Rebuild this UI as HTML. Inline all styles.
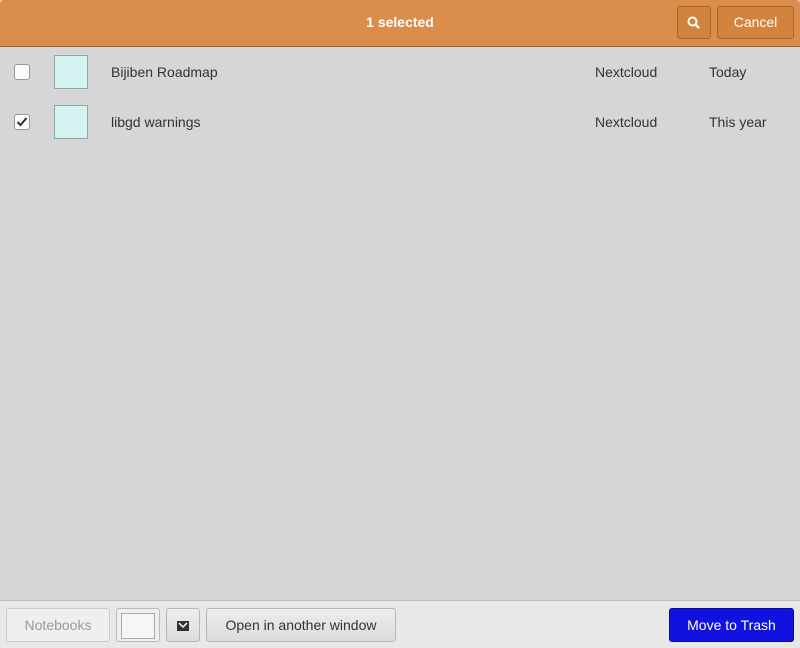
<!DOCTYPE html>
<html><head><style>
body{margin:0;width:800px;height:647px;background:#d5d6d5;font-family:"Liberation Sans",sans-serif;font-size:14px;color:#2e3436;position:relative;overflow:hidden}
.hdr{position:absolute;left:0;top:0;width:800px;height:46px;background:#d98e4b;border-bottom:1px solid #a0612a;border-radius:4px 4px 0 0}
.title{position:absolute;left:0;width:800px;top:14px;text-align:center;color:#fff;font-weight:bold;font-size:14px}
.hb{position:absolute;top:6px;height:33px;background:#d2843f;border:1px solid #a96526;border-radius:3px;box-sizing:border-box;color:#fff;text-align:center;line-height:31px}
.row{position:absolute;left:0;width:800px;height:50px}
.cb{position:absolute;left:14px;top:14px;width:14px;height:14px;border:1px solid #999;border-radius:3px;background:#fafafa}
.th{position:absolute;left:54px;top:5px;width:32px;height:32px;background:#d4f2f0;border:1px solid #8aa}
.t{position:absolute;top:14px}
.foot{position:absolute;left:0;top:600px;width:800px;height:47px;background:#e8e8e7;border-top:1px solid #bdbdbd}
.b{position:absolute;top:7px;height:34px;box-sizing:border-box;border:1px solid #b6b6b3;border-radius:3px;background:linear-gradient(#ededec,#dcdcda);text-align:center;line-height:32px}
</style></head><body>
<div class="hdr"><div class="title">1 selected</div>
<div class="hb" style="left:677px;width:34px"><svg width="16" height="16" viewBox="0 0 16 16" style="vertical-align:middle"><circle cx="6.5" cy="6.5" r="4" fill="none" stroke="#fff" stroke-width="2"/><path d="M9.5 9.5L13 13" stroke="#fff" stroke-width="2.5"/></svg></div>
<div class="hb" style="left:717px;width:77px">Cancel</div></div>
<div class="row" style="top:50px"><div class="cb"></div><div class="th"></div><div class="t" style="left:111px">Bijiben Roadmap</div><div class="t" style="left:595px">Nextcloud</div><div class="t" style="left:709px">Today</div></div>
<div class="row" style="top:100px"><div class="cb"><svg width="14" height="14" viewBox="0 0 14 14" style="position:absolute;left:0;top:0"><path d="M2.5 7l3 3 6-7" fill="none" stroke="#2e3436" stroke-width="2"/></svg></div><div class="th"></div><div class="t" style="left:111px">libgd warnings</div><div class="t" style="left:595px">Nextcloud</div><div class="t" style="left:709px">This year</div></div>
<div class="foot">
<div class="b" style="left:6px;width:104px;background:#efefee;color:#999;border-color:#ccc">Notebooks</div>
<div class="b" style="left:116px;width:44px;background:#efefee;border-color:#bbb"><div style="position:absolute;left:4px;top:4px;width:32px;height:24px;background:#f6f6f6;border:1px solid #aaa"></div></div>
<div class="b" style="left:166px;width:34px"><svg width="14" height="12" viewBox="0 0 14 12" style="vertical-align:middle"><rect x="1" y="1" width="12" height="10" fill="#2e3436"/><path d="M3 3l4 4 4-4" fill="none" stroke="#fff" stroke-width="1.5"/></svg></div>
<div class="b" style="left:206px;width:190px">Open in another window</div>
<div class="b" style="left:669px;width:125px;background:#1212e0;border-color:#0a0a9a;color:#fff">Move to Trash</div>
</div>
</body></html>
